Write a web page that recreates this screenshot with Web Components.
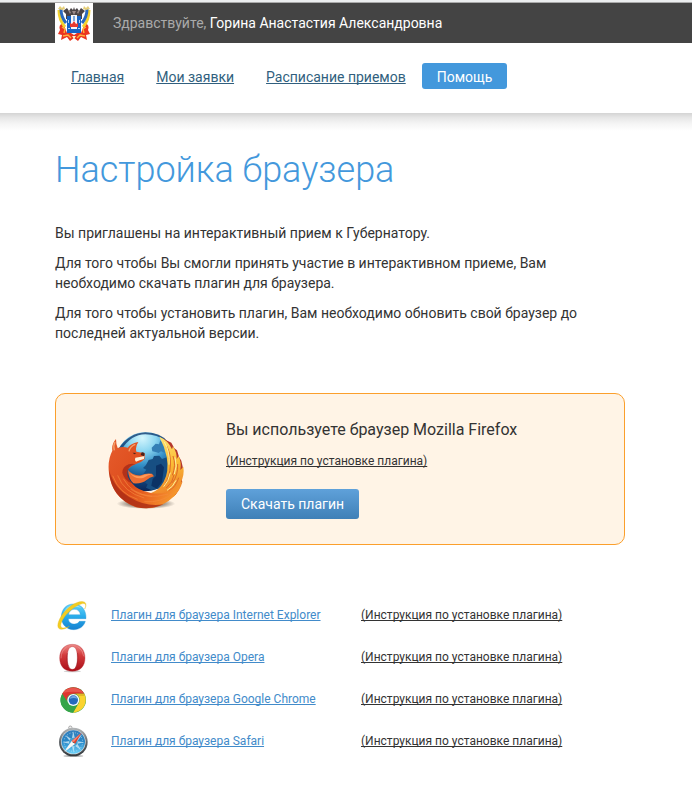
<!DOCTYPE html>
<html lang="ru">
<head>
<meta charset="utf-8">
<meta name="viewport" content="width=device-width, initial-scale=1">
<title>Настройка браузера</title>
<style>
body { margin: 0; background: #fff; color: #333; font: 14px/20px Roboto, "Liberation Sans", sans-serif; text-decoration-skip-ink: none; --left: 55px; --right: 67px; --accent: #4398dc; }
</style>
</head>
<body>
<user-bar greeting="Здравствуйте,">Горина Анастастия Александровна</user-bar>
<site-nav>
  <nav-item href="#home">Главная</nav-item>
  <nav-item href="#requests">Мои заявки</nav-item>
  <nav-item href="#schedule">Расписание приемов</nav-item>
  <nav-item href="#help" current>Помощь</nav-item>
</site-nav>
<page-content heading="Настройка браузера">
  <text-block>Вы приглашены на интерактивный прием к Губернатору.</text-block>
  <text-block>Для того чтобы Вы смогли принять участие в интерактивном приеме, Вам необходимо скачать плагин для браузера.</text-block>
  <text-block>Для того чтобы установить плагин, Вам необходимо обновить свой браузер до последней актуальной версии.</text-block>
  <browser-card>Вы используете браузер Mozilla Firefox</browser-card>
  <plugin-list>
    <plugin-row icon="ie">Плагин для браузера Internet Explorer</plugin-row>
    <plugin-row icon="opera">Плагин для браузера Opera</plugin-row>
    <plugin-row icon="chrome">Плагин для браузера Google Chrome</plugin-row>
    <plugin-row icon="safari">Плагин для браузера Safari</plugin-row>
  </plugin-list>
</page-content>

<script>
const emblem = `<svg viewBox="0 0 38 40" width="38" height="40" aria-hidden="true">
<rect width="38" height="40" fill="#fff"/>
<path d="M8 20Q3 22 5 27L3 31 7 32 6 37 12 34 15 38 19 35 23 38 26 34 32 37 31 32 35 31 33 27Q35 22 30 20L26 30H12z" fill="#ea3420"/>
<path d="M7 24l3 2-1 4M31 24l-3 2 1 4M8 33l5-1 3 3M30 33l-5-1-3 3" fill="none" stroke="#ffb03c" stroke-width="1.400"/>
<path d="M4 7Q4 17 10 24M34 7Q34 17 28 24" fill="none" stroke="#f4d22f" stroke-width="3"/>
<path d="M6 6Q6 14 11 20M32 6Q32 14 27 20" fill="none" stroke="#2a68bd" stroke-width="3"/>
<path d="M3 6l2-3 2 2 2-2 1 3-3 1zM35 6l-2-3-2 2-2-2-1 3 3 1z" fill="#e5cf78"/>
<path d="M8 8l4-3 2 3 2-3 2 2 1-3 1 3 2-2 2 3 2-3 4 3-3 3v5H11v-5z" fill="#4a4447"/>
<path d="M13 7l3 2-1 2zM25 7l-3 2 1 2zM17 8h4l-2 4z" fill="#9a898a"/>
<path d="M12 13h4v-1h6v1h4v17h-5l-2 2-2-2h-5z" fill="#1763c5"/>
<path d="M16 12h6v18l-3 2-3-2z" fill="#f5f6fa"/>
<path d="M18 13h2v5h-2z" fill="#7da9de"/>
<path d="M15 20l2 1 2-3 2 3 2-1v4h-8z" fill="#e63a31"/>
<path d="M16 26h6v4h-6z" fill="#1763c5"/>
<path d="M13 17h1v3h-1zM24 17h1v3h-1zM13 25h2v1h-2zM23 25h2v1h-2z" fill="#b6d2ef"/>
<path d="M17 33h4l-2 3z" fill="#fff2ca"/>
</svg>`;

const firefox = `<svg viewBox="36 27 240 240" width="80" height="80" aria-hidden="true">
<defs>
<radialGradient id="globe" cx=".45" cy=".1" r=".9"><stop offset="0" stop-color="#d5f6fd"/><stop offset=".25" stop-color="#8ed7f1"/><stop offset=".5" stop-color="#3490c8"/><stop offset=".78" stop-color="#12467f"/><stop offset="1" stop-color="#0a2557"/></radialGradient>
<linearGradient id="fur" x1="0" y1=".2" x2="1" y2=".8"><stop offset="0" stop-color="#e4592a"/><stop offset=".45" stop-color="#dd4c1b"/><stop offset=".75" stop-color="#ee7526"/><stop offset="1" stop-color="#f7a22d"/></linearGradient>
<linearGradient id="tail" x1=".2" y1="0" x2=".4" y2="1"><stop offset="0" stop-color="#ffe475"/><stop offset=".5" stop-color="#fbbd35"/><stop offset="1" stop-color="#ed7c28"/></linearGradient>
<radialGradient id="shade"><stop offset=".4" stop-color="#3d332b" stop-opacity=".75"/><stop offset="1" stop-color="#3d332b" stop-opacity="0"/></radialGradient>
</defs>
<ellipse cx="150" cy="251" rx="88" ry="16" fill="url(#shade)"/>
<circle cx="148" cy="125" r="89" fill="url(#globe)"/>
<path d="M68 86Q99 39 148 37Q194 38 215 65Q182 43 148 43Q105 44 78 87z" fill="#103b70" opacity=".8"/>
<path d="M167 83l12-12 10 2 4-12 10 10 4 28-12-5-7 5-9-3-10-2z" fill="#347fb5"/>
<path d="M158 120l12-3 4-9 16-1 8 10 17-6v56l-10 25-17 14-22 4-16-7 5-10-8-5 10-12-5-10-10-4 9-13-10-5 9-9z" fill="#174f83"/>
<path d="M180 137l15-6 9 11-6 44-16 20-16-9 4-20 10-9z" fill="#0b3265"/>
<path d="M199 55L226 68 235 85 243 91 249 110 256 122 261 145 258 165 258 186 248 207 239 224 220 235 220 80z" fill="#b4382b"/>
<path d="M190 50Q218 62 228 88L231 79Q243 98 242 117L248 108Q257 128 253 150L262 140Q266 165 254 188L260 184Q252 212 235 228Q205 252 165 219Q190 210 203 185Q220 155 212 110Q206 80 190 50z" fill="url(#tail)"/>
<path d="M212 78Q225 103 223 135Q222 169 206 195M231 108Q241 135 229 166M245 132Q247 165 229 188M234 165Q231 187 211 204M248 173Q241 199 218 214" fill="none" stroke="#dd6727" stroke-width="3"/>
<path d="M205 66Q223 96 219 134M237 112Q245 139 235 162M223 158Q218 184 203 200M240 181Q231 202 213 211" fill="none" stroke="#fff09d" stroke-width="3"/>
<path d="M60 57Q46 72 49 92Q34 120 39 160Q48 235 120 262Q190 275 235 228Q252 208 257 180Q245 200 228 208Q205 225 165 219Q125 212 108 190Q85 165 96 148Q104 138 118 133Q136 128 146 117L146 100 121 95Q117 80 127 66Q106 69 95 83Q80 78 65 84Q60 72 60 57z" fill="url(#fur)"/>
<path d="M39 150Q43 233 120 261Q165 271 202 253Q150 261 106 235Q55 207 39 150z" fill="#a92a15" opacity=".8"/>
<path d="M50 167Q69 221 125 238M65 166Q83 217 145 234M82 176Q107 223 168 229M103 207Q151 242 217 222M145 245Q195 249 229 221" fill="none" stroke="#f68b3d" stroke-width="3" opacity=".65"/>
<path d="M79 158Q79 140 98 133Q109 129 119 133Q102 135 96 149Q90 169 108 190Q85 182 79 158z" fill="#a82918" opacity=".8"/>
<path d="M96 150Q110 168 135 166Q150 158 168 161L174 169Q160 172 152 180Q138 192 112 190Q98 177 96 150z" fill="#ed6e32"/>
<path d="M98 155Q112 171 135 168Q151 160 169 163Q155 166 143 173Q118 181 98 155z" fill="#ff9b58"/>
<path d="M118 113Q131 111 145 108L144 117Q130 120 120 125Q115 119 118 113z" fill="#fff0da"/>
<path d="M137 97Q146 96 146 102L144 109 134 105zM110 98l11 1-6 4z" fill="#4c211a"/>
<path d="M57 66Q51 77 55 91M118 73Q102 79 99 94" fill="none" stroke="#f5a06a" stroke-width="4"/>
</svg>`;

const icons = {
ie: `<svg viewBox="21 15 96 96" aria-hidden="true"><defs><linearGradient id="a" x2="0" y2="1"><stop stop-color="#62d4fb"/><stop offset=".5" stop-color="#27abea"/><stop offset="1" stop-color="#1681d0"/></linearGradient></defs>
<path d="M70 27c24 0 39 16 38 44H55c1 11 8 16 18 16 7 0 13-3 15-8h18c-5 16-18 25-35 25-22 0-37-16-37-38 0-23 15-39 36-39zM56 59h35c-1-10-8-16-17-16-10 0-17 6-18 16z" fill="url(#a)" stroke="#1b8dce" stroke-width="1"/>
<path d="M41 53q8-21 31-22 13-1 22 8-25-10-53 14z" fill="#b5edff" opacity=".65"/>
<path d="M104 42c6-12 5-21-5-22-19-3-49 18-65 43-15 24-13 40 0 40 8 0 17-4 24-9-11 5-22 7-25 1-4-10 10-34 31-51 20-16 38-22 42-16 2 3 1 9-2 14z" fill="#f3cc22" stroke="#e5b619" stroke-width="1"/></svg>`,
opera: `<svg viewBox="21 141 96 96" aria-hidden="true"><defs><linearGradient id="a" x2="0" y2="1"><stop stop-color="#ed8c89"/><stop offset=".4" stop-color="#d33b3c"/><stop offset="1" stop-color="#a90e18"/></linearGradient></defs>
<ellipse cx="67" cy="229" rx="26" ry="3" fill="#777" opacity=".35"/>
<path fill-rule="evenodd" d="M67 148c24 0 38 17 38 41s-14 40-38 40-38-16-38-40 14-41 38-41zm0 7c-11 0-15 13-15 34 0 20 4 34 15 34s15-14 15-34c0-21-4-34-15-34z" fill="url(#a)" stroke="#b53139"/>
<path d="M50 156q-17 11-17 34M85 156q14 10 16 28" fill="none" stroke="#f4aaa8" stroke-width="2" opacity=".7"/><path d="M52 174q-4 27 6 44M83 174q3 27-7 45" fill="none" stroke="#861018" stroke-width="2" opacity=".6"/></svg>`,
chrome: `<svg viewBox="21 21 96 96" aria-hidden="true"><circle cx="70" cy="69" r="38" fill="#39a546"/>
<path d="M36 51A38 38 0 0 1 103 50H70c-12 0-20 9-19 22z" fill="#df3630"/><path d="M103 50c11 23 1 53-34 57l18-30q7-15-9-27z" fill="#fbd32f"/>
<path d="M37 50q-14 24 4 44 11 13 28 13l11-20q-20 4-28-11z" fill="#35a449"/>
<path d="M39 47q10-14 30-14 19 0 31 14-30-5-61 0z" fill="#ee6d62" opacity=".6"/><path d="M70 50h33l2 7H82z" fill="#b0891d" opacity=".35"/>
<circle cx="70" cy="69" r="18" fill="#f7fbff"/><circle cx="70" cy="69" r="14" fill="#246abc"/><path d="M58 66q3-9 12-10 9 0 12 9-11-4-24 1z" fill="#6fa7e2"/></svg>`,
safari: `<svg viewBox="21 147 96 96" aria-hidden="true"><defs><linearGradient id="a" x2="0" y2="1"><stop stop-color="#347fbb"/><stop offset=".5" stop-color="#2687c8"/><stop offset="1" stop-color="#70d4fa"/></linearGradient><linearGradient id="b" x2="0" y2="1"><stop stop-color="#b5b8ba"/><stop offset=".5" stop-color="#63686c"/><stop offset="1" stop-color="#33383b"/></linearGradient></defs>
<ellipse cx="70" cy="237" rx="30" ry="3" fill="#444" opacity=".4"/>
<circle cx="61" cy="152" r="5" fill="#eee" stroke="#888" stroke-width="2"/><circle cx="70" cy="195" r="43" fill="url(#b)"/><circle cx="70" cy="195" r="37" fill="#d5dadd"/><circle cx="70" cy="195" r="35" fill="url(#a)"/>
<circle cx="70" cy="195" r="28" fill="none" stroke="#c7e7f5" stroke-width="3" stroke-dasharray="2 6"/>
<path d="M70 163l5 24 21-14-14 20 21 3-21 4 11 19-19-13-4 21-4-21-20 12 13-18-22-4 22-4-13-18 19 13z" fill="#cfeaf6" opacity=".8"/><circle cx="70" cy="195" r="13" fill="#439fce"/>
<path d="M95 167L75 201l-10-9z" fill="#df3f29"/><path d="M65 192l10 9-32 24z" fill="#f7f8f7"/><path d="M95 167L70 197l-5-5z" fill="#fb8370"/><circle cx="70" cy="196" r="2" fill="#555"/></svg>`
};

function element(name, render) {
  customElements.define(name, class extends HTMLElement {
    connectedCallback() {
      if (this.shadowRoot) return;
      this.attachShadow({ mode: "open" }).innerHTML = render(this);
    }
  });
}

element("user-bar", el => `<style>
:host { display: block; color: #fff; }
.edge { height: 2px; background: #eceeef; border-bottom: 1px solid #aaa; }
header { display: flex; align-items: center; gap: 20px; height: 40px; padding-left: var(--left); background: #444; }
svg { display: block; flex: none; } span { color: #aaa; } p { margin: 0; }
</style><div class="edge"></div><header>${emblem}<p><span>${el.getAttribute("greeting")}</span> <slot></slot></p></header>`);

element("site-nav", () => `<style>
:host { display: block; }
nav { display: flex; align-items: center; height: 66px; padding: 0 0 4px var(--left); background: #fff; }
.shadow { height: 18px; background: linear-gradient(#d4d4d4, #e6e6e6 25%, #f5f5f5 60%, #fff); }
</style><nav aria-label="Основное меню"><slot></slot></nav><div class="shadow"></div>`);

element("nav-item", el => {
  const current = el.hasAttribute("current");
  return `<style>
:host { display: block; }
a { display: block; padding: 4px 16px 2px; border-radius: 3px; color: #315f7e; line-height: 20px; text-underline-offset: 1px; }
a[aria-current] { padding: 4px 15px 2px; background: var(--accent); color: #fff; text-decoration: none; }
</style><a href="${el.getAttribute("href")}"${current ? ' aria-current="page"' : ""}><slot></slot></a>`;
});

element("page-content", el => `<style>
:host { display: block; padding: 17px var(--right) 32px var(--left); }
h1 { margin: 0 0 31px; color: var(--accent); font-size: 36px; line-height: 44px; font-weight: 300; }
</style><main><h1>${el.getAttribute("heading")}</h1><slot></slot></main>`);

element("text-block", () => `<style>:host { display: block; margin-bottom: 10px; } p { margin: 0; }</style><p><slot></slot></p>`);

element("browser-card", () => `<style>
:host { display: block; margin-top: 50px; }
section { display: flex; align-items: center; gap: 38px; padding: 24px 52px; border: 1px solid #fb9f2c; border-radius: 10px; background: #fff4e6; }
svg { flex: none; }
.info { display: flex; flex-direction: column; align-items: flex-start; }
h2 { margin: 0 0 9px; font-size: 16px; line-height: 24px; font-weight: 400; }
a { color: #333; font-size: 12px; line-height: 20px; text-underline-offset: 1px; }
button { margin: 18px 0 1px; height: 30px; padding: 0 15px; border: 0; border-radius: 3px; background: linear-gradient(#5fa1da, #3f80b7); color: #fff; font: inherit; cursor: pointer; }
</style><section>${firefox}<div class="info"><h2><slot></slot></h2><a href="#guide">(Инструкция по установке плагина)</a><button type="button">Скачать плагин</button></div></section>`);

element("plugin-list", () => `<style>:host { display: block; margin-top: 50px; }</style><div role="list"><slot></slot></div>`);

element("plugin-row", el => `<style>
:host { display: block; }
div { display: grid; grid-template-columns: 56px 250px 1fr; align-items: center; height: 42px; font-size: 12px; }
svg { display: block; width: 32px; height: 32px; margin-left: 2px; overflow: visible; }
span { padding-bottom: 2px; }
a { color: #333; text-underline-offset: 1px; } .plugin { color: #428bca; }
</style><div role="listitem">${icons[el.getAttribute("icon")]}<span><a class="plugin" href="#${el.getAttribute("icon")}"><slot></slot></a></span><span><a href="#guide-${el.getAttribute("icon")}">(Инструкция по установке плагина)</a></span></div>`);
</script>
</body>
</html>
